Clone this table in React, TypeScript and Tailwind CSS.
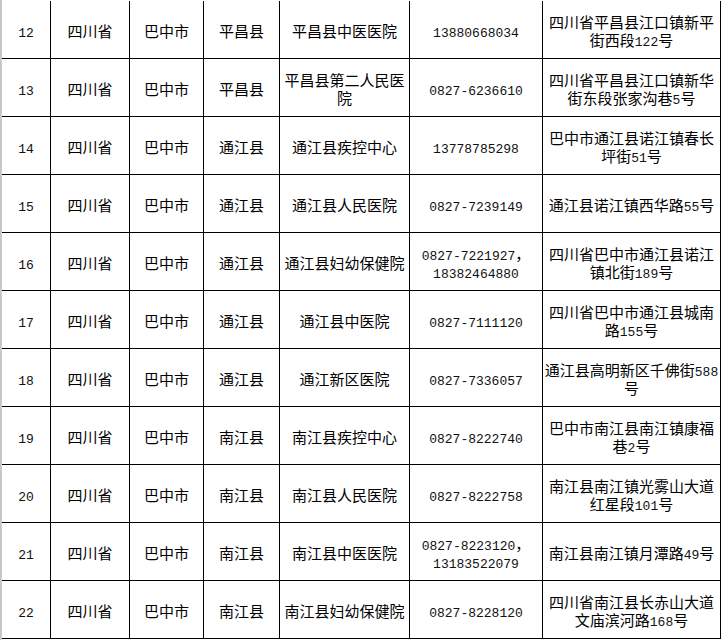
type Row = {
  no: string;
  county: string;
  org: string;
  phone: string[];
  addr: string;
};

const rows: Row[] = [
  { no: '12', county: '平昌县', org: '平昌县中医医院', phone: ['13880668034'], addr: '四川省平昌县江口镇新平街西段122号' },
  { no: '13', county: '平昌县', org: '平昌县第二人民医院', phone: ['0827-6236610'], addr: '四川省平昌县江口镇新华街东段张家沟巷5号' },
  { no: '14', county: '通江县', org: '通江县疾控中心', phone: ['13778785298'], addr: '巴中市通江县诺江镇春长坪街51号' },
  { no: '15', county: '通江县', org: '通江县人民医院', phone: ['0827-7239149'], addr: '通江县诺江镇西华路55号' },
  { no: '16', county: '通江县', org: '通江县妇幼保健院', phone: ['0827-7221927，', '18382464880'], addr: '四川省巴中市通江县诺江镇北街189号' },
  { no: '17', county: '通江县', org: '通江县中医院', phone: ['0827-7111120'], addr: '四川省巴中市通江县城南路155号' },
  { no: '18', county: '通江县', org: '通江新区医院', phone: ['0827-7336057'], addr: '通江县高明新区千佛街588号' },
  { no: '19', county: '南江县', org: '南江县疾控中心', phone: ['0827-8222740'], addr: '巴中市南江县南江镇康福巷2号' },
  { no: '20', county: '南江县', org: '南江县人民医院', phone: ['0827-8222758'], addr: '南江县南江镇光雾山大道红星段101号' },
  { no: '21', county: '南江县', org: '南江县中医医院', phone: ['0827-8223120，', '13183522079'], addr: '南江县南江镇月潭路49号' },
  { no: '22', county: '南江县', org: '南江县妇幼保健院', phone: ['0827-8228120'], addr: '四川省南江县长赤山大道文庙滨河路168号' },
];

// digits and dashes use a narrow mono face, like the bitmap SimSun digits
function Mixed({ text }: { text: string }) {
  const parts = text.split(/([0-9\-]+)/);
  return (
    <>
      {parts.map((p, i) =>
        /^[0-9\-]+$/.test(p) ? (
          <span key={i} className="font-['Liberation_Mono',monospace] text-[13px] leading-none text-[#111]">
            {p}
          </span>
        ) : (
          <span key={i}>{p}</span>
        )
      )}
    </>
  );
}

function Cell({ children, pad = 'px-[2px]' }: { children: React.ReactNode; pad?: string }) {
  return (
    <div className={'flex items-center justify-center border-r border-black pt-[2px] text-center ' + pad}>
      <div className="leading-[18px]">{children}</div>
    </div>
  );
}

export default function App() {
  return (
    <div className="flex w-[722px] h-[640px] bg-white text-black font-['Noto_Sans_CJK_SC',sans-serif] text-[15px]">
      <div className="w-[2px] shrink-0 bg-[#c8c8c8]" />
      <div className="pt-px">
        {rows.map((r) => (
          <div
            key={r.no}
            className="grid h-[58px] grid-cols-[49px_79px_74px_76px_130px_133px_178px] border-b border-black"
          >
            <Cell>
              <Mixed text={r.no} />
            </Cell>
            <Cell>四川省</Cell>
            <Cell>巴中市</Cell>
            <Cell>{r.county}</Cell>
            <Cell pad="px-0">{r.org}</Cell>
            <Cell>
              {r.phone.map((p, i) => (
                <div key={i}>
                  <Mixed text={p} />
                </div>
              ))}
            </Cell>
            <Cell pad="px-px">
              <Mixed text={r.addr} />
            </Cell>
          </div>
        ))}
      </div>
    </div>
  );
}
